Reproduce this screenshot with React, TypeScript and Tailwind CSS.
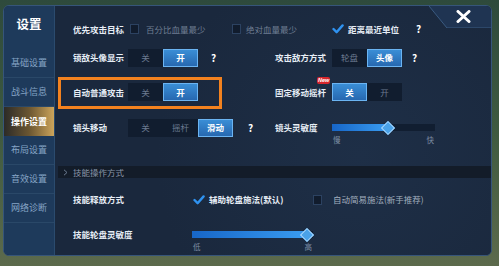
import React from "react";

const Check = () => (
  <svg width="12" height="10" viewBox="0 0 12 10" className="shrink-0">
    <path d="M1.5 5 L4.6 8.2 L10.6 1.4" fill="none" stroke="#2f92f0" strokeWidth="2.4" strokeLinecap="round" strokeLinejoin="round" />
  </svg>
);

const Box = () => <div className="w-[9px] h-[10px] shrink-0 border border-[#2c4261] bg-[#111c2d]" />;

const Q = ({ ml }: { ml: string }) => (
  <span className={`text-white font-bold text-[10px] leading-none ${ml}`}>?</span>
);

function Seg({ items, active }: { items: string[]; active: number }) {
  return (
    <div className="flex">
      {items.map((t, i) =>
        i === active ? (
          <div
            key={t}
            className="w-[35px] h-[18px] flex items-center justify-center bg-gradient-to-b from-[#3a8ed6] to-[#2768b0] border border-[#6bb4f2] text-white font-bold text-[8.5px]"
          >
            {t}
          </div>
        ) : (
          <div
            key={t}
            className="w-[35px] h-[18px] flex items-center justify-center bg-[#111d2f] text-[#6b7a90] text-[8.5px]"
          >
            {t}
          </div>
        )
      )}
    </div>
  );
}

function Slider({ w, pos, lo, hi }: { w: number; pos: number; lo: string; hi: string }) {
  return (
    <div className="relative h-[7px] bg-[#111e31]" style={{ width: w }}>
      <div className="absolute left-0 top-0 h-full bg-gradient-to-r from-[#1766c8] to-[#3a9cf0]" style={{ width: pos }} />
      <div
        className="absolute w-[10px] h-[10px] rotate-45 bg-[#4aa2e8] border border-[#a8d8ff]"
        style={{ left: pos - 5, top: -1.5 }}
      />
      <span className="absolute left-[1px] top-[11px] text-[7.5px] leading-[9px] text-[#7d8ea4]">{lo}</span>
      <span className="absolute right-[1px] top-[11px] text-[7.5px] leading-[9px] text-[#7d8ea4]">{hi}</span>
    </div>
  );
}

const L = ({ children, w }: { children: React.ReactNode; w: string }) => (
  <div className={`${w} shrink-0 text-[8.5px] font-bold text-[#e6edf5] leading-none whitespace-nowrap`}>{children}</div>
);

export default function App() {
  const side = ["基础设置", "战斗信息", "操作设置", "布局设置", "音效设置", "网络诊断"];
  return (
    <div className="w-[499px] h-[266px] overflow-hidden bg-gradient-to-b from-[#2e4a3c] via-[#3f5a40] to-[#5c6a4c] pt-[5px] pl-[3px] pr-[7px] pb-[10px] font-['Noto_Sans_CJK_SC','Noto_Sans',sans-serif]">
      <div className="relative w-full h-full flex rounded-[6px] border border-[#36557a] bg-[#1a283d] overflow-hidden">
        {/* sidebar */}
        <div className="w-[51px] shrink-0 bg-[#1e3a5b] border-r border-[#2b4b6e] flex flex-col">
          <div className="h-[43px] pt-[10px] flex justify-center">
            <span className="text-white font-bold text-[12.5px] leading-[15px]">设置</span>
          </div>
          {side.map((s, i) =>
            i === 2 ? (
              <div
                key={s}
                className="h-[29px] flex items-center justify-center bg-gradient-to-r from-[#2c2b27] via-[#6b5631] to-[#cda55b] text-white font-bold text-[9px]"
              >
                {s}
              </div>
            ) : (
              <div
                key={s}
                className="h-[29px] flex items-center justify-center border-b border-[#2a4868] text-[#86a5c6] text-[9px]"
              >
                {s}
              </div>
            )
          )}
        </div>

        {/* content */}
        <div className="flex-1 flex flex-col pt-[9px] bg-[radial-gradient(circle_at_70%_60%,#1e2f47_0%,#1a283d_60%)]">
          {/* row 1 */}
          <div className="h-[28px] flex items-center pl-[18px]">
            <L w="w-[57px]">优先攻击目标</L>
            <div className="w-[102px] flex items-center gap-[7px]">
              <Box />
              <span className="text-[8.5px] text-[#6f7e93] leading-none">百分比血量最少</span>
            </div>
            <div className="w-[100px] flex items-center gap-[5px]">
              <Box />
              <span className="text-[8.5px] text-[#6f7e93] leading-none">绝对血量最少</span>
            </div>
            <div className="flex items-center gap-[4px]">
              <Check />
              <span className="text-[8.5px] font-bold text-[#e6edf5] leading-none">距离最近单位</span>
            </div>
            <Q ml="ml-[17px]" />
          </div>

          {/* row 2 */}
          <div className="h-[29px] flex items-center pl-[18px]">
            <div className="w-[202px] flex items-center">
              <L w="w-[55px]">锁敌头像显示</L>
              <Seg items={["关", "开"]} active={1} />
              <Q ml="ml-[13px]" />
            </div>
            <div className="flex items-center">
              <L w="w-[57px]">攻击敌方方式</L>
              <Seg items={["轮盘", "头像"]} active={1} />
              <Q ml="ml-[10px]" />
            </div>
          </div>

          {/* row 3 */}
          <div className="relative h-[40px] flex items-center pl-[18px]">
            <div className="absolute left-[3px] top-[5px] w-[164px] h-[32px] border-[3.5px] border-[#f3821f]" />
            <div className="w-[202px] flex items-center">
              <L w="w-[55px]">自动普通攻击</L>
              <Seg items={["关", "开"]} active={1} />
            </div>
            <div className="flex items-center">
              <div className="relative">
                <L w="w-[57px]">固定移动摇杆</L>
                <span className="absolute left-[42px] top-[-11px] px-[1px] rounded-[2px] bg-[#d8262c] text-white italic font-bold text-[5.5px] leading-[7px] font-['Liberation_Sans',sans-serif]">
                  New
                </span>
              </div>
              <Seg items={["关", "开"]} active={0} />
            </div>
          </div>

          {/* row 4 */}
          <div className="h-[31px] flex items-center pl-[18px]">
            <div className="w-[202px] flex items-center">
              <L w="w-[55px]">镜头移动</L>
              <Seg items={["关", "摇杆", "滑动"]} active={2} />
              <Q ml="ml-[15px]" />
            </div>
            <div className="flex items-center">
              <L w="w-[57px]">镜头灵敏度</L>
              <Slider w={103} pos={56} lo="慢" hi="快" />
            </div>
          </div>

          {/* section header */}
          <div className="mt-[23px] ml-[3px] h-[12px] flex items-center pl-[5px] bg-[#131c29]">
            <svg width="5" height="7" viewBox="0 0 5 7" className="mr-[5px]">
              <path d="M1 0.8 L4 3.5 L1 6.2" fill="none" stroke="#6d7c92" strokeWidth="1" />
            </svg>
            <span className="text-[8.5px] text-[#8a97aa] leading-none">技能操作方式</span>
          </div>

          {/* row 5 */}
          <div className="h-[43px] flex items-center pl-[18px]">
            <L w="w-[120px]">技能释放方式</L>
            <div className="w-[120px] flex items-center gap-[4px]">
              <Check />
              <span className="text-[8.5px] font-bold text-[#e6edf5] leading-none">辅助轮盘施法(默认)</span>
            </div>
            <div className="flex items-center gap-[11px]">
              <Box />
              <span className="text-[8.5px] text-[#a3afbf] leading-none">自动简易施法(新手推荐)</span>
            </div>
          </div>

          {/* row 6 */}
          <div className="h-[27px] flex items-center pl-[18px]">
            <L w="w-[119px]">技能轮盘灵敏度</L>
            <Slider w={121} pos={115} lo="低" hi="高" />
          </div>
        </div>

        {/* close tab */}
        <div className="absolute top-0 right-0 w-[62px] h-[22px]">
          <svg width="62" height="22" viewBox="0 0 62 22" className="absolute inset-0">
            <path d="M0 0 L62 0 L62 22 L18 22 Z" fill="#1f3452" />
            <path d="M0 0 L18 22 L62 22" fill="none" stroke="#3a5a80" strokeWidth="1" />
          </svg>
          <svg width="15" height="13" viewBox="0 0 15 13" className="absolute left-[27px] top-[4px]">
            <path d="M2 1.5 L13 11.5 M13 1.5 L2 11.5" stroke="#ffffff" strokeWidth="3" strokeLinecap="round" />
          </svg>
        </div>
      </div>
    </div>
  );
}
